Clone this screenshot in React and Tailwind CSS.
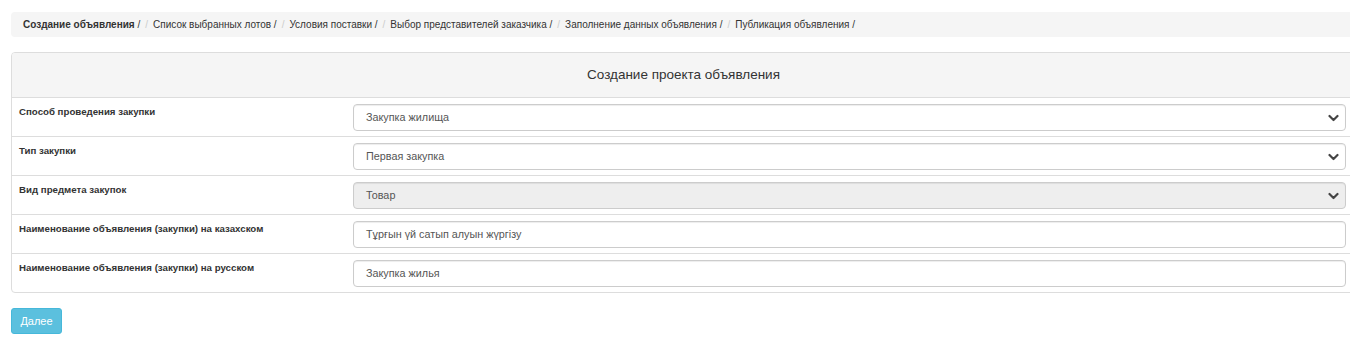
import React from "react";

const crumbs = [
  "Создание объявления /",
  "Список выбранных лотов /",
  "Условия поставки /",
  "Выбор представителей заказчика /",
  "Заполнение данных объявления /",
  "Публикация объявления /",
];

function Chevron() {
  return (
    <svg width="11" height="8" viewBox="0 0 11 8" className="absolute right-[6px] top-1/2 -translate-y-1/2">
      <path d="M1.5 2 L5.5 6 L9.5 2" fill="none" stroke="#444" strokeWidth="2.2" strokeLinecap="round" strokeLinejoin="round" />
    </svg>
  );
}

function Row({ label, value, select, disabled }) {
  return (
    <div className="flex border-t border-[#ddd] h-[39px]">
      <div className="w-[333px] shrink-0 pl-[7px] pt-[7px] text-[9.7px] font-bold text-[#333] leading-[14px]">
        {label}
      </div>
      <div className="flex-1 pl-[8px] pr-[9px] pt-[6px]">
        <div
          className={`relative h-[27px] rounded-[4px] border border-[#ccc] shadow-[inset_0_1px_1px_rgba(0,0,0,0.075)] flex items-center pl-[12px] text-[10.8px] text-[#555] ${disabled ? "bg-[#eee]" : "bg-white"}`}
        >
          {value}
          {select && <Chevron />}
        </div>
      </div>
    </div>
  );
}

export default function App() {
  return (
    <div className="w-[1350px] h-[347px] overflow-hidden bg-white font-['Liberation_Sans',Arial,sans-serif]">
      <div className="pl-[11px] pt-[12px]">
        <div className="w-[1345px] h-[25px] bg-[#f5f5f5] rounded-l-[4px] flex items-center pl-[12px] text-[10px] text-[#333]">
          {crumbs.map((c, i) => (
            <React.Fragment key={i}>
              {i > 0 && <span className="text-[#ccc] px-[5px]">/</span>}
              <span className={i === 0 ? "font-bold" : ""}>
                {i === 0 ? (
                  <>
                    Создание объявления <span className="font-normal">/</span>
                  </>
                ) : (
                  c
                )}
              </span>
            </React.Fragment>
          ))}
        </div>

        <div className="mt-[15px] w-[1345px] border border-[#ddd] rounded-l-[4px] overflow-hidden">
          <div className="h-[44px] bg-[#f5f5f5] flex items-center justify-center text-[13.5px] text-[#333]">
            Создание проекта объявления
          </div>
          <Row label="Способ проведения закупки" value="Закупка жилища" select />
          <Row label="Тип закупки" value="Первая закупка" select />
          <Row label="Вид предмета закупок" value="Товар" select disabled />
          <Row label="Наименование объявления (закупки) на казахском" value="Тұрғын үй сатып алуын жүргізу" />
          <Row label="Наименование объявления (закупки) на русском" value="Закупка жилья" />
        </div>

        <button className="mt-[15px] w-[51px] h-[26px] rounded-[3px] bg-[#5bc0de] border border-[#46b8da] text-white text-[11px] flex items-center justify-center">
          Далее
        </button>
      </div>
    </div>
  );
}
